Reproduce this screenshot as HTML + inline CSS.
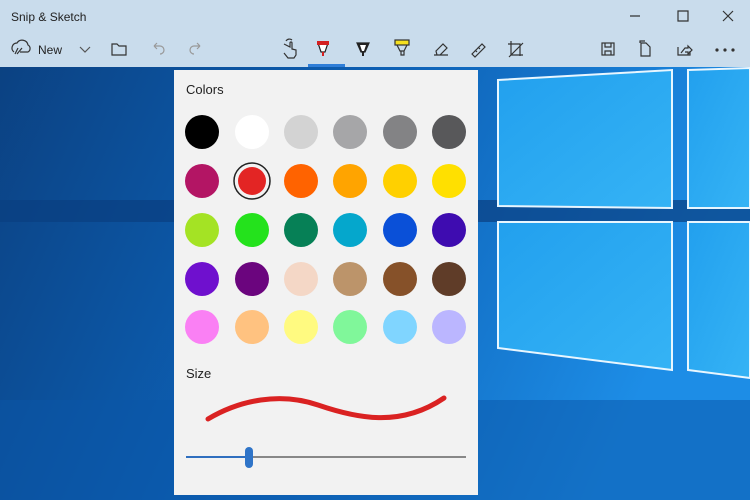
<!DOCTYPE html>
<html><head><style>
body{margin:0;width:750px;height:500px;overflow:hidden;font-family:"Liberation Sans",sans-serif;position:relative;}
.bar{position:absolute;left:0;top:0;width:750px;height:67px;background:#c9dcec;}
.sel{position:absolute;left:308px;top:64px;width:37px;height:3px;background:#2f7ed8;}
.panel{position:absolute;left:174px;top:70px;width:304px;height:425px;background:#f2f2f2;}
.lbl{position:absolute;font-size:13px;color:#222;}
.c{position:absolute;width:34px;height:34px;border-radius:50%;}
</style></head><body>
<svg width="750" height="500" style="position:absolute;left:0;top:0">
<defs>
<linearGradient id="bg" x1="0" y1="0" x2="1" y2="0.3"><stop offset="0" stop-color="#0b3f7e"/><stop offset="0.5" stop-color="#0d5fb3"/><stop offset="1" stop-color="#1d8de6"/></linearGradient>
<linearGradient id="pn" x1="0" y1="0" x2="1" y2="1"><stop offset="0" stop-color="#22a0ee"/><stop offset="1" stop-color="#35b3f5"/></linearGradient>
</defs>
<rect width="750" height="500" fill="url(#bg)"/>
<rect x="0" y="200" width="750" height="22" fill="#0a3f80" opacity="0.7"/>
<rect x="0" y="400" width="750" height="100" fill="#0a55a8" opacity="0.5"/>
<polygon points="498,80 672,70 672,208 498,206" fill="url(#pn)" stroke="#e8f6ff" stroke-width="2"/>
<polygon points="498,222 672,222 672,370 498,348" fill="url(#pn)" stroke="#e8f6ff" stroke-width="2"/>
<polygon points="688,70 750,68 750,208 688,208" fill="url(#pn)" stroke="#e8f6ff" stroke-width="2"/>
<polygon points="688,222 750,222 750,378 688,370" fill="url(#pn)" stroke="#e8f6ff" stroke-width="2"/>
</svg>
<div class="bar"></div>
<div class="lbl" style="left:11px;top:10px;font-size:12px">Snip &amp; Sketch</div>
<div class="lbl" style="left:38px;top:43px;font-size:12px">New</div>
<svg width="750" height="67" style="position:absolute;left:0;top:0" fill="none" stroke="#333" stroke-width="1.2">
<path d="M630 16h10M678 11h10v10h-10zM723 11l10 10M733 11l-10 10"/>
<path d="M14 52a5 5 0 0 1 3-9 6 6 0 0 1 11 2 4 4 0 0 1 0 7h-8M18 48l-3 6M22 48l-5 6"/>
<path d="M80 47l5 5 5-5" stroke="#555"/>
<path d="M112 44h5l2 2h7v9h-14z"/>
<path d="M154 46l3-3M154 46l3 3M154 46h6a4 4 0 0 1 0 8" stroke="#999"/>
<path d="M200 46l-3-3M200 46l-3 3M200 46h-6a4 4 0 0 0 0 8" stroke="#999"/>
<path d="M284 44l6 3v-4a1 1 0 0 1 2 0v6l4 1v5l-2 3h-6l-4-5 M286 41a4 4 0 0 1 6-1"/>
<path d="M318 43h10l-3 9h-4z" fill="#fff" stroke="#222"/><rect x="317" y="41" width="12" height="4" fill="#d42020" stroke="none"/><path d="M323 52v4" stroke="#d42020" stroke-width="2"/>
<path d="M357 43h12l-4 9h-4z" fill="#222" stroke="#222"/><path d="M363 52v4" stroke="#222" stroke-width="2"/><path d="M360 45h6l-2 6h-2z" fill="#fff" stroke="none"/>
<rect x="395" y="40" width="14" height="5" fill="#f5e020" stroke="#333"/><path d="M397 45l3 6h4l3-6M401 51v4h3v-4"/>
<path d="M434 55h14M436 51l7-7 4 4-7 7h-3z"/>
<path d="M472 54l10-10 3 3-10 10zM475 50l2 2M478 47l2 2"/>
<path d="M511 41v14h12M508 44h12v12M509 57l14-14"/>
<rect x="602" y="43" width="12" height="12"/><path d="M605 43v4h6v-4M605 55v-4h6v4"/>
<path d="M641 43h5l4 4v9h-9zM640 43v-2h5"/>
<path d="M678 47v8h12v-4M681 53l4-5h3v-2l4 4-4 4v-2h-3"/>
<circle cx="717" cy="50" r="1" fill="#333"/><circle cx="725" cy="50" r="1" fill="#333"/><circle cx="733" cy="50" r="1" fill="#333"/>
</svg>
<div class="sel"></div>
<div class="panel"></div>
<div class="lbl" style="left:186px;top:82px">Colors</div>
<div class="lbl" style="left:186px;top:366px">Size</div>
<div id="g"></div>
<svg width="750" height="500" style="position:absolute;left:0;top:0">
<path d="M208 419C240 400 280 392 318 405S400 428 444 398" fill="none" stroke="#da2222" stroke-width="5" stroke-linecap="round"/>
<line x1="186" y1="457" x2="249" y2="457" stroke="#2f6fbf" stroke-width="2"/>
<line x1="249" y1="457" x2="466" y2="457" stroke="#888" stroke-width="2"/>
<rect x="245" y="447" width="8" height="21" rx="4" fill="#2f74c8"/>
<circle cx="252" cy="181" r="18" fill="none" stroke="#222" stroke-width="1.5"/>
</svg>
<script>
var cols=["#000000","#ffffff","#d3d3d3","#a6a6a8","#838385","#58585a",
"#b31564","#e32524","#ff6300","#ffa400","#ffd000","#ffe000",
"#a4e324","#24e21c","#068056","#05a7cc","#0a50d8","#3e0cb0",
"#6f10ce","#6b057e","#f4d7c6","#bc946a","#865129","#5f3c28",
"#fa80f4","#ffc280","#fffa80","#80f79a","#80d5ff","#bbb6ff"];
var xs=[202,252,301,350,400,449],ys=[132,181,230,279,327],h="";
cols.forEach(function(c,i){var x=xs[i%6],y=ys[Math.floor(i/6)],s=(i==7)?28:34;
h+='<div class="c" style="left:'+(x-s/2)+'px;top:'+(y-s/2)+'px;width:'+s+'px;height:'+s+'px;background:'+c+'"></div>';});
document.getElementById('g').innerHTML=h;
</script>
</body></html>
